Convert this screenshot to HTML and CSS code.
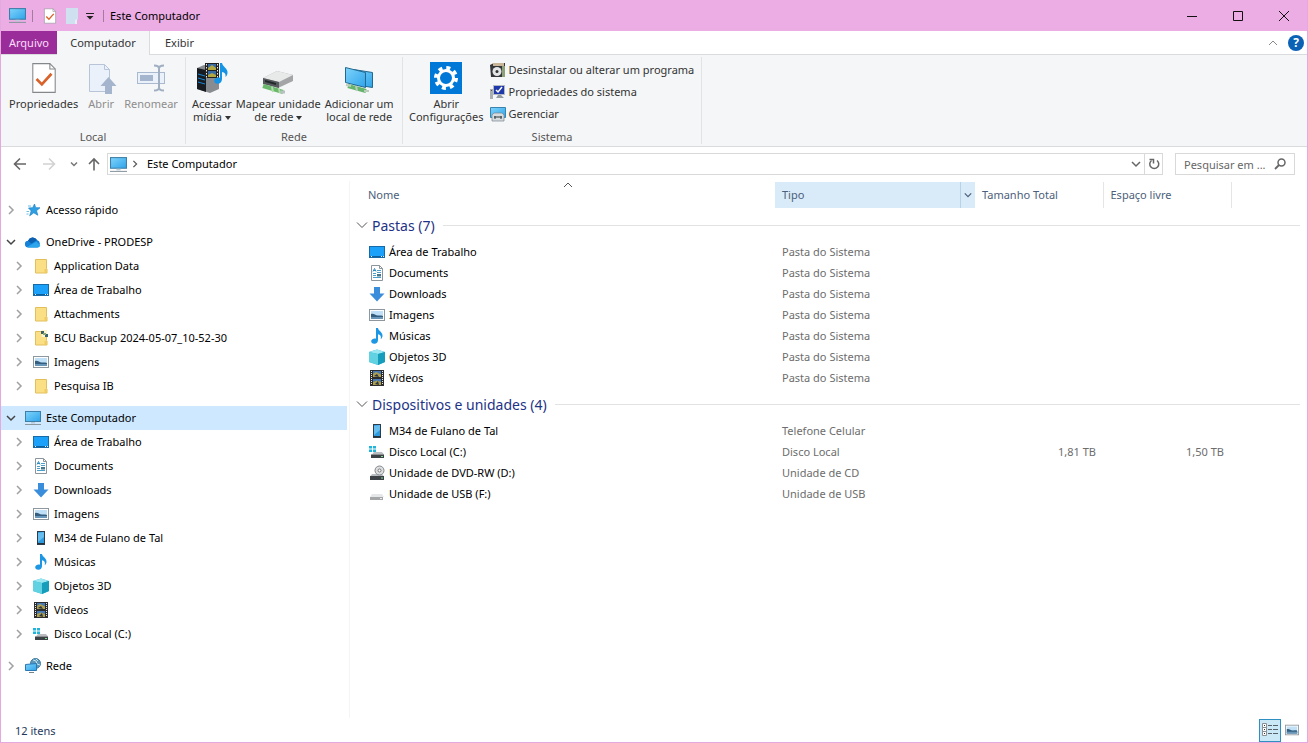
FILE: index.html
```html
<!DOCTYPE html>
<html lang="pt-BR">
<head>
    <meta charset="UTF-8">
    <meta name="viewport" content="width=device-width, initial-scale=1.0">
    <title>Este Computador</title>
    <link rel="stylesheet" href="styles.css">
</head>
<body>
    <!-- Ícones reutilizados -->
    <svg class="sprite" aria-hidden="true">
        <defs>
            <linearGradient id="screen" x1="0" y1="0" x2="1" y2="1">
                <stop offset="0" stop-color="#7fd4fb"/>
                <stop offset="1" stop-color="#2ea3ea"/>
            </linearGradient>
        </defs>
        <symbol id="pc" viewBox="0 0 16 16">
            <rect x="0.5" y="1.5" width="15" height="10" fill="url(#screen)" stroke="#3d7fa8"/>
            <path d="M6 12h4v1.500H6z" fill="#b9cbd6"/>
            <path d="M0 14.500h16" stroke="#8a979f"/>
        </symbol>
        <symbol id="star" viewBox="0 0 16 16">
            <path d="M9.500 2l1.200 3.700 4.300.1-3.500 2.900 1.300 4.500-4-2.400-4.100 3 1.500-4.900L3.500 6l4.200-.3z" fill="#2f9fe4" stroke="#1b82c6" stroke-width=".7"/>
            <path d="M3 4h3M1.500 9.500H4M1.500 12h2" stroke="#6cbcec"/>
        </symbol>
        <symbol id="cloud" viewBox="0 0 16 16">
            <path d="M3.500 13.500A3.400 3.400 0 0 1 3 6.700 5 5 0 0 1 12 6a4 4 0 0 1 .5 7.500z" fill="#1482d8"/>
            <path d="M3 6.700A5 5 0 0 1 12 6L6.500 9.500z" fill="#0b5fae"/>
            <path d="M2 13l9.500-5.500 3.800 4.200c-.5 1.200-1.500 1.800-2.800 1.800h-9z" fill="#2ba5ec"/>
        </symbol>
        <symbol id="folder" viewBox="0 0 16 16">
            <path d="M2.500 1.500h11v9l.5.500v4H2.500z" fill="#fbdf85" stroke="#e3bf59"/>
            <path d="M11.500 15v-3.500l2-1.500v5z" fill="#f1cb62"/>
        </symbol>
        <symbol id="folder-bcu" viewBox="0 0 16 16">
            <use href="#folder"/>
            <path d="M8.500 0H14v7H8.500z" fill="#fdf3cc"/>
            <path d="M8 1h3v3H8zM12 4h3v3h-3z" fill="#39606d"/>
            <path d="M10 3h3v2h-3z" fill="#8ba978"/>
        </symbol>
        <symbol id="desktop" viewBox="0 0 16 16">
            <rect x=".5" y="2.500" width="15" height="11" fill="#1ba1fa" stroke="#146ba8"/>
            <path d="M1 12.500h14" stroke="#0e5f9d"/>
            <path d="M2 12.500h1M12 12.500h1M14 12.500h1" stroke="#d9f1ff"/>
        </symbol>
        <symbol id="doc" viewBox="0 0 16 16">
            <path d="M2.500.5h8l3 3v12h-11z" fill="#fff" stroke="#8b959b"/>
            <path d="M10.500.5v3h3" fill="none" stroke="#8b959b"/>
            <path d="M4 6.500l1.500-3L7 6.500M4.500 5.500h2" fill="none" stroke="#2b8cc0"/>
            <path d="M8 5.500h4M4 8.500h3M8 7.500h4M4 10.500h3M4 12.500h8" stroke="#4ba0cb"/>
            <path d="M8 9h4v2.500H8z" fill="#45778f"/>
        </symbol>
        <symbol id="down" viewBox="0 0 16 16">
            <path d="M5 1h6v6.500h4.500L8 15.500.5 7.500H5z" fill="#3a8ddb"/>
        </symbol>
        <symbol id="image" viewBox="0 0 16 16">
            <rect x=".5" y="2.500" width="15" height="11" fill="#fff" stroke="#8e979d"/>
            <path d="M2 4h12v8H2z" fill="#bfe0f7"/>
            <path d="M2 7c3-1 4 1.500 7 1.500S13 8 14 9v3H2z" fill="#355f80"/>
            <path d="M2 10h12v2H2z" fill="#6796b9"/>
        </symbol>
        <symbol id="phone" viewBox="0 0 16 16">
            <rect x="4.500" y="1.500" width="7" height="13" fill="#2f9bdf" stroke="#2c3e4d"/>
            <path d="M5 3l6-1v5l-6 5z" fill="#66bdf0"/>
            <path d="M4 13.500h8" stroke="#27323c"/>
        </symbol>
        <symbol id="music" viewBox="0 0 16 16">
            <path d="M7 0h2c.3 3.200 4.800 3.800 4.500 8-.1 1.600-1 2.500-1.800 3.200.8-3-.4-4.400-2.700-5V12c0 2.300-1.500 3.600-3.500 3.700-2 .1-3.500-1.200-3.300-2.800.3-2 2.600-2.900 4.800-2.300z" fill="#1d97e3"/>
        </symbol>
        <symbol id="cube" viewBox="0 0 16 16">
            <path d="M0 3l8-2.500L16 3v10l-7 3-9-3z" fill="#28b4cf"/>
            <path d="M0 3l8-2.500L16 3 9 5z" fill="#9ce8f2"/>
            <path d="M0 3l9 2v11l-9-3z" fill="#60d2e2"/>
            <path d="M9 5l7-2v10l-7 3z" fill="#169dbb"/>
        </symbol>
        <symbol id="film" viewBox="0 0 16 16">
            <path d="M1 0h14v16H1z" fill="#2d2d30"/>
            <path d="M2.500 1v14M13.500 1v14" stroke="#e9e9e9" stroke-dasharray="1 1"/>
            <path d="M4 1h8v6H4zM4 9h8v6H4z" fill="#4779b5"/>
            <path d="M4 4l3-2 5 2.500V7H4zM4 12l4-1.500 4 1.500v3H4z" fill="#b0a04b"/>
            <path d="M5 6l3-2 2 3zM6 14l3-3 1 4z" fill="#29354a"/>
        </symbol>
        <symbol id="disk" viewBox="0 0 16 16">
            <path d="M3 9h10l2 2.500H1z" fill="#b9bdc0"/>
            <path d="M1 11h14v4H1z" fill="#3c4246"/>
            <path d="M12 13h2" stroke="#7be28c"/>
        </symbol>
        <symbol id="disk-win" viewBox="0 0 16 16">
            <path d="M5 8h8l2 2.500H3z" fill="#b9bdc0"/>
            <path d="M2 10.500h13V14H2z" fill="#3c4246"/>
            <path d="M12 12.500h2" stroke="#7be28c"/>
            <path d="M0 2h3v2.500H0zM4 2h3v2.500H4zM0 5.500h3V8H0zM4 5.500h3V8H4z" fill="#1eb4dc"/>
        </symbol>
        <symbol id="disk-dvd" viewBox="0 0 16 16">
            <use href="#disk"/>
            <circle cx="10.500" cy="5.500" r="4.500" fill="#dcdee0" stroke="#85898c"/>
            <circle cx="10.500" cy="5.500" r="1.500" fill="#fff" stroke="#777"/>
        </symbol>
        <symbol id="disk-usb" viewBox="0 0 16 16">
            <path d="M3 8h10l2 3H1z" fill="#e6e7e8"/>
            <path d="M1 11h13v3H1z" fill="#a4a6a8"/>
            <path d="M11 12.500h2" stroke="#eee"/>
        </symbol>
        <symbol id="network" viewBox="0 0 16 16">
            <circle cx="10.500" cy="5.500" r="5" fill="#5d98ba" stroke="#3f7ba1"/>
            <path d="M8 2l3 1 1 3 3 1M11 1l2 2" fill="none" stroke="#cbe4ed"/>
            <path d="M.5 6.500l11-1v7h-11z" fill="url(#screen)" stroke="#2878b5"/>
            <path d="M4 14.500h5" stroke="#72848e"/>
        </symbol>
        <symbol id="check-doc" viewBox="0 0 24 30">
            <path d="M1.500 1.500h16l5 5v22h-21z" fill="#fff" stroke="#85888b"/>
            <path d="M17.500 1.500v5h5" fill="none" stroke="#85888b"/>
            <path d="M5 16l5 5 9-10" fill="none" stroke="#d9622b" stroke-width="2.500"/>
        </symbol>
        <symbol id="chev" viewBox="0 0 10 10">
            <path d="M3 1l4 4-4 4" fill="none" stroke="currentColor" stroke-width="1.500"/>
        </symbol>
        <symbol id="chev-down" viewBox="0 0 10 10">
            <path d="M1 3l4 4 4-4" fill="none" stroke="currentColor" stroke-width="1.500"/>
        </symbol>
        <symbol id="chev-thin" viewBox="0 0 12 12">
            <path d="M1 3.500l5 5 5-5" fill="none" stroke="currentColor"/>
        </symbol>
        <symbol id="chev-up" viewBox="0 0 10 10">
            <path d="M1 7l4-4 4 4" fill="none" stroke="currentColor"/>
        </symbol>
    </svg>

    <div class="window">
        <header class="titlebar">
            <svg class="title-pc"><use href="#pc"/></svg>
            <span class="title-sep"></span>
            <button class="quick" aria-label="Propriedades"><svg class="icon"><use href="#check-doc"/></svg></button>
            <button class="quick" aria-label="Nova pasta">
                <svg class="icon" viewBox="0 0 16 16"><path d="M2 0h12v11l-1 1v4H2z" fill="#cfe1f0"/><path d="M11 16v-4l2-1v5z" fill="#e6eff5"/></svg>
            </button>
            <button class="quick quick-more" aria-label="Personalizar">
                <svg class="more" viewBox="0 0 8 8"><path d="M0 1.500h8" stroke="#222"/><path d="M0.500 4h7L4 7.500z" fill="#222"/></svg>
            </button>
            <span class="title-sep"></span>
            <h1>Este Computador</h1>
            <div class="window-buttons">
                <button aria-label="Minimizar"><svg viewBox="0 0 12 12"><path d="M1 6.500h10" stroke="#111"/></svg></button>
                <button aria-label="Maximizar"><svg viewBox="0 0 12 12"><path d="M1.500 1.500h9v9h-9z" fill="none" stroke="#111"/></svg></button>
                <button aria-label="Fechar"><svg viewBox="0 0 12 12"><path d="M1 1l10 10M11 1L1 11" stroke="#111"/></svg></button>
            </div>
        </header>

        <nav class="tabs">
            <button class="tab tab-file">Arquivo</button>
            <button class="tab tab-active">Computador</button>
            <button class="tab">Exibir</button>
            <div class="tabs-right">
                <button aria-label="Minimizar a Faixa de Opções"><svg class="chev gray"><use href="#chev-up"/></svg></button>
                <button class="help" aria-label="Ajuda">?</button>
            </div>
        </nav>

        <section class="ribbon">
            <div class="group group-local">
                <div class="tools">
                    <button class="tool">
                        <svg class="big"><use href="#check-doc"/></svg>
                        <span>Propriedades</span>
                    </button>
                    <button class="tool" disabled>
                        <svg class="big" viewBox="0 0 32 32">
                            <path d="M4.500 2.500h15l5 5v22h-20z" fill="#eaf1fa" stroke="#b8c5d8"/>
                            <path d="M19.500 2.500v5h5" fill="none" stroke="#b8c5d8"/>
                            <path d="M23.500 15l8 9H27v8h-7v-8h-4.500z" fill="#a5b5cd"/>
                        </svg>
                        <span>Abrir</span>
                    </button>
                    <button class="tool" disabled>
                        <svg class="big" viewBox="0 0 32 32">
                            <rect x="2.500" y="10.500" width="27" height="11" fill="#eaf1fa" stroke="#a9b9d0"/>
                            <path d="M5 13h13v6H5z" fill="#a5b5cd"/>
                            <path d="M19 3.500c3 0 5 .5 5 3v19c0 2.500-2 3-5 3M29 3.500c-3 0-5 .5-5 3v19c0 2.500 2 3 5 3" fill="none" stroke="#a0aec2" stroke-width="2"/>
                        </svg>
                        <span>Renomear</span>
                    </button>
                </div>
                <h2>Local</h2>
            </div>
            <div class="group group-rede">
                <div class="tools">
                    <button class="tool">
                        <svg class="big" viewBox="0 0 32 32">
                            <path d="M1 6l7-3 15 2v22l-9 4L1 27z" fill="#888b90"/>
                            <path d="M1 6l9 2v22l-9-3z" fill="#171c22"/>
                            <path d="M2 12l7 2M2 16l7 2M2 20l7 2" stroke="#1786d5"/>
                            <path d="M9 1h14v15H9z" fill="#222"/>
                            <path d="M10.500 2v14M21.500 2v14" stroke="#eee" stroke-dasharray="1.500 1.500"/>
                            <path d="M12 2h8v6h-8zM12 9h8v6h-8z" fill="#3769a5"/>
                            <path d="M12 6l4-3 4 3v2h-8zM12 13l4-2 4 2v2h-8z" fill="#b3a73f"/>
                            <path d="M24 1h2c.5 4 6 5 5.500 10-.2 2-1 3-2 4 .5-3-.7-4.500-3.500-5v7c0 3-2 4.700-4.300 4.800-2.200 0-3.700-1.300-3.500-3.300.3-2.500 3-3.500 5.800-2.700z" fill="#1593e5"/>
                        </svg>
                        <span>Acessar<br>mídia <i class="caret"></i></span>
                    </button>
                    <button class="tool">
                        <svg class="big" viewBox="0 0 32 32">
                            <path d="M1 16l14-7 16 4v6l-15 7-15-5z" fill="#a3a5a6"/>
                            <path d="M1 16l14-7 16 4-14 7z" fill="#e8e9e9"/>
                            <path d="M1 16l16 4v6L1 22z" fill="#555a5d"/>
                            <path d="M3 18l11 3v2L3 20z" fill="#24282b"/>
                            <path d="M1 24l20 6" stroke="#69b86c" stroke-width="4"/>
                            <path d="M10 25l1 5M17 27l1 4" stroke="#b1dcaa" stroke-width="2"/>
                            <path d="M19 30h4" stroke="#b9bfc2" stroke-width="3"/>
                        </svg>
                        <span>Mapear unidade<br>de rede <i class="caret"></i></span>
                    </button>
                    <button class="tool">
                        <svg class="big" viewBox="0 0 32 32">
                            <path d="M10.500 7.500l19 3v15l-19-3z" fill="url(#screen)" stroke="#24688f"/>
                            <path d="M2.500 5.500l20 5v15l-20-5z" fill="url(#screen)" stroke="#24688f"/>
                            <path d="M5 24l18 5" stroke="#65b46b" stroke-width="4"/>
                            <path d="M13 24l1 5M3 23l5 1M21 29h5" stroke="#b9cdbb" stroke-width="2"/>
                        </svg>
                        <span>Adicionar um<br>local de rede</span>
                    </button>
                </div>
                <h2>Rede</h2>
            </div>
            <div class="group group-sistema">
                <div class="tools">
                    <button class="tool">
                        <svg class="big" viewBox="0 0 32 32">
                            <path d="M0 0h32v32H0z" fill="#0078d7"/>
                            <circle cx="16" cy="16" r="7.500" fill="none" stroke="#fff" stroke-width="3"/>
                            <circle cx="16" cy="16" r="10" fill="none" stroke="#fff" stroke-width="4" stroke-dasharray="3.927 3.927"/>
                        </svg>
                        <span>Abrir<br>Configurações</span>
                    </button>
                    <div class="small-tools">
                        <button class="small-tool">
                            <svg class="icon" viewBox="0 0 16 16">
                                <path d="M0 3l4-2h11v14H1z" fill="#35363a"/>
                                <path d="M3 1h11v3H3z" fill="#c9b698"/>
                                <path d="M12 4h3v11h-3z" fill="#8da27a"/>
                                <circle cx="7" cy="9.500" r="4.500" fill="#e3e5e6"/>
                                <circle cx="7" cy="9.500" r="1.500" fill="#333"/>
                            </svg>
                            Desinstalar ou alterar um programa
                        </button>
                        <button class="small-tool">
                            <svg class="icon" viewBox="0 0 16 16">
                                <path d="M0 5h3v10H0z" fill="#a9aeb3"/>
                                <path d="M1 6.500h1" stroke="#555"/>
                                <path d="M3.500 1.500h11v9h-11z" fill="#2039aa" stroke="#b2b9c2"/>
                                <path d="M6 6l2 2 4-5" fill="none" stroke="#fff" stroke-width="1.500"/>
                                <path d="M8 11h3l3 3H6z" fill="#939ba3"/>
                            </svg>
                            Propriedades do sistema
                        </button>
                        <button class="small-tool">
                            <svg class="icon" viewBox="0 0 16 16">
                                <path d="M.5 1.500h15v10H.5z" fill="url(#screen)" stroke="#3984af"/>
                                <path d="M2 9l2-2h8l2 2v6H2z" fill="#d7dcdf" stroke="#75858f" stroke-width=".7"/>
                                <path d="M4 11h8M5 10v3M11 10v3" stroke="#2f3a42"/>
                            </svg>
                            Gerenciar
                        </button>
                    </div>
                </div>
                <h2>Sistema</h2>
            </div>
        </section>

        <div class="address-row">
            <button class="nav-btn" aria-label="Voltar"><svg viewBox="0 0 14 14"><path d="M13 7H1.500M7 1.500L1.500 7 7 12.500" fill="none" stroke="#666" stroke-width="1.600"/></svg></button>
            <button class="nav-btn" aria-label="Avançar" disabled><svg viewBox="0 0 14 14"><path d="M1 7h11.500M7 1.500L12.500 7 7 12.500" fill="none" stroke="#d2d2d2" stroke-width="1.600"/></svg></button>
            <button class="nav-btn nav-recent" aria-label="Locais recentes"><svg viewBox="0 0 14 14"><path d="M4 5.500l3 3 3-3" fill="none" stroke="#777" stroke-width="1.500"/></svg></button>
            <button class="nav-btn nav-up" aria-label="Acima"><svg viewBox="0 0 14 14"><path d="M7 13.500V2M2 7l5-5 5 5" fill="none" stroke="#666" stroke-width="1.600"/></svg></button>
            <div class="address">
                <svg class="address-pc"><use href="#pc"/></svg>
                <svg class="crumb"><use href="#chev"/></svg>
                <a href="#">Este Computador</a>
                <button class="address-drop" aria-label="Locais anteriores"><svg class="chev"><use href="#chev-down"/></svg></button>
                <button class="refresh" aria-label="Atualizar">
                    <svg viewBox="0 0 12 12"><path d="M9 2.500A4.500 4.500 0 1 1 3.500 2.500" fill="none" stroke="#666" stroke-width="1.500"/><path d="M1.500 1.500h4v4" fill="none" stroke="#666" stroke-width="1.500"/></svg>
                </button>
            </div>
            <label class="search">
                <input type="text" placeholder="Pesquisar em ..." aria-label="Pesquisar em Este Computador">
                <svg viewBox="0 0 12 12"><circle cx="7.500" cy="4.500" r="3.500" fill="none" stroke="#666" stroke-width="1.500"/><path d="M5 7L1 11" stroke="#666" stroke-width="1.800"/></svg>
            </label>
        </div>

        <main class="panes">
            <aside class="sidebar">
                <ul class="tree">
                    <li><a href="#"><svg class="chev"><use href="#chev"/></svg><svg class="icon"><use href="#star"/></svg>Acesso rápido</a></li>
                    <li>
                        <a href="#" class="open"><svg class="chev"><use href="#chev-down"/></svg><svg class="icon"><use href="#cloud"/></svg>OneDrive - PRODESP</a>
                        <ul>
                            <li><a href="#"><svg class="chev"><use href="#chev"/></svg><svg class="icon"><use href="#folder"/></svg>Application Data</a></li>
                            <li><a href="#"><svg class="chev"><use href="#chev"/></svg><svg class="icon"><use href="#desktop"/></svg>Área de Trabalho</a></li>
                            <li><a href="#"><svg class="chev"><use href="#chev"/></svg><svg class="icon"><use href="#folder"/></svg>Attachments</a></li>
                            <li><a href="#"><svg class="chev"><use href="#chev"/></svg><svg class="icon"><use href="#folder-bcu"/></svg>BCU Backup 2024-05-07_10-52-30</a></li>
                            <li><a href="#"><svg class="chev"><use href="#chev"/></svg><svg class="icon"><use href="#image"/></svg>Imagens</a></li>
                            <li><a href="#"><svg class="chev"><use href="#chev"/></svg><svg class="icon"><use href="#folder"/></svg>Pesquisa IB</a></li>
                        </ul>
                    </li>
                    <li>
                        <a href="#" class="open selected"><svg class="chev"><use href="#chev-down"/></svg><svg class="icon"><use href="#pc"/></svg>Este Computador</a>
                        <ul>
                            <li><a href="#"><svg class="chev"><use href="#chev"/></svg><svg class="icon"><use href="#desktop"/></svg>Área de Trabalho</a></li>
                            <li><a href="#"><svg class="chev"><use href="#chev"/></svg><svg class="icon"><use href="#doc"/></svg>Documents</a></li>
                            <li><a href="#"><svg class="chev"><use href="#chev"/></svg><svg class="icon"><use href="#down"/></svg>Downloads</a></li>
                            <li><a href="#"><svg class="chev"><use href="#chev"/></svg><svg class="icon"><use href="#image"/></svg>Imagens</a></li>
                            <li><a href="#"><svg class="chev"><use href="#chev"/></svg><svg class="icon"><use href="#phone"/></svg>M34 de Fulano de Tal</a></li>
                            <li><a href="#"><svg class="chev"><use href="#chev"/></svg><svg class="icon"><use href="#music"/></svg>Músicas</a></li>
                            <li><a href="#"><svg class="chev"><use href="#chev"/></svg><svg class="icon"><use href="#cube"/></svg>Objetos 3D</a></li>
                            <li><a href="#"><svg class="chev"><use href="#chev"/></svg><svg class="icon"><use href="#film"/></svg>Vídeos</a></li>
                            <li><a href="#"><svg class="chev"><use href="#chev"/></svg><svg class="icon"><use href="#disk-win"/></svg>Disco Local (C:)</a></li>
                        </ul>
                    </li>
                    <li><a href="#"><svg class="chev"><use href="#chev"/></svg><svg class="icon"><use href="#network"/></svg>Rede</a></li>
                </ul>
            </aside>

            <section class="content">
                <table class="files">
                    <colgroup>
                        <col class="col-name"><col class="col-type"><col class="col-size"><col class="col-size"><col>
                    </colgroup>
                    <thead>
                        <tr>
                            <th scope="col" class="sorted">Nome<svg class="chev sort"><use href="#chev-up"/></svg></th>
                            <th scope="col" class="hovered"><div class="head-cell">Tipo<button aria-label="Filtrar"><svg class="chev-small"><use href="#chev-down"/></svg></button></div></th>
                            <th scope="col" class="divided">Tamanho Total</th>
                            <th scope="col" class="divided">Espaço livre</th>
                            <td></td>
                        </tr>
                    </thead>
                    <tbody>
                        <tr class="group-row"><th colspan="5" scope="rowgroup"><div class="group-title"><svg class="chev-big"><use href="#chev-thin"/></svg>Pastas (7)</div></th></tr>
                        <tr><td><a href="#"><svg class="icon"><use href="#desktop"/></svg>Área de Trabalho</a></td><td>Pasta do Sistema</td><td></td><td></td><td></td></tr>
                        <tr><td><a href="#"><svg class="icon"><use href="#doc"/></svg>Documents</a></td><td>Pasta do Sistema</td><td></td><td></td><td></td></tr>
                        <tr><td><a href="#"><svg class="icon"><use href="#down"/></svg>Downloads</a></td><td>Pasta do Sistema</td><td></td><td></td><td></td></tr>
                        <tr><td><a href="#"><svg class="icon"><use href="#image"/></svg>Imagens</a></td><td>Pasta do Sistema</td><td></td><td></td><td></td></tr>
                        <tr><td><a href="#"><svg class="icon"><use href="#music"/></svg>Músicas</a></td><td>Pasta do Sistema</td><td></td><td></td><td></td></tr>
                        <tr><td><a href="#"><svg class="icon"><use href="#cube"/></svg>Objetos 3D</a></td><td>Pasta do Sistema</td><td></td><td></td><td></td></tr>
                        <tr><td><a href="#"><svg class="icon"><use href="#film"/></svg>Vídeos</a></td><td>Pasta do Sistema</td><td></td><td></td><td></td></tr>
                    </tbody>
                    <tbody>
                        <tr class="group-row"><th colspan="5" scope="rowgroup"><div class="group-title"><svg class="chev-big"><use href="#chev-thin"/></svg>Dispositivos e unidades (4)</div></th></tr>
                        <tr><td><a href="#"><svg class="icon"><use href="#phone"/></svg>M34 de Fulano de Tal</a></td><td>Telefone Celular</td><td></td><td></td><td></td></tr>
                        <tr><td><a href="#"><svg class="icon"><use href="#disk-win"/></svg>Disco Local (C:)</a></td><td>Disco Local</td><td class="num">1,81 TB</td><td class="num">1,50 TB</td><td></td></tr>
                        <tr><td><a href="#"><svg class="icon"><use href="#disk-dvd"/></svg>Unidade de DVD-RW (D:)</a></td><td>Unidade de CD</td><td></td><td></td><td></td></tr>
                        <tr><td><a href="#"><svg class="icon"><use href="#disk-usb"/></svg>Unidade de USB (F:)</a></td><td>Unidade de USB</td><td></td><td></td><td></td></tr>
                    </tbody>
                </table>
            </section>
        </main>

        <footer class="statusbar">
            <span>12 itens</span>
            <div class="views">
                <button class="view view-active" aria-label="Detalhes">
                    <svg class="icon" viewBox="0 0 16 16"><path d="M.5 1.500h4v4h-4zM.5 5.500h4v4h-4zM.5 9.500h4v4h-4z" fill="#fff" stroke="#8a8f93"/><path d="M2 3.500h1M2 7.500h1M2 11.500h1" stroke="#333"/><path d="M6 3.500h4M11 3.500h5M6 7.500h4M11 7.500h5M6 11.500h4M11 11.500h5" stroke="#56616a"/></svg>
                </button>
                <button class="view" aria-label="Miniaturas"><svg class="thumb"><use href="#image"/></svg></button>
            </div>
        </footer>
    </div>
</body>
</html>
```
FILE: styles.css
```css
* {
    margin: 0;
    padding: 0;
    box-sizing: border-box;
}

body {
    font-family: 'Segoe UI', 'Noto Sans', 'Open Sans', sans-serif;
    font-size: 11px;
    color: #000;
    background: #fff;
}

button {
    font: inherit;
    color: inherit;
    background: none;
    border: none;
}

a {
    color: inherit;
    text-decoration: none;
}

svg {
    display: block;
    flex-shrink: 0;
}

.sprite {
    position: absolute;
    width: 0;
    height: 0;
}

.icon {
    width: 16px;
    height: 16px;
}

.chev {
    width: 10px;
    height: 10px;
}

.chev-small {
    width: 8px;
    height: 8px;
    margin: 0 1px;
}

.gray {
    color: #888;
}

.window {
    min-height: 100vh;
    display: flex;
    flex-direction: column;
    border: 1px solid #e6a9df;
    border-top: none;
}

/* Barra de título */
.titlebar {
    height: 31px;
    display: flex;
    align-items: center;
    padding-left: 8px;
    background: #ebade4;
}

.title-pc {
    width: 17px;
    height: 17px;
}

.title-sep {
    width: 1px;
    height: 12px;
    margin: 0 6px;
    background: #a57aa0;
}

.quick {
    width: 22px;
    height: 22px;
    display: flex;
    align-items: center;
    justify-content: center;
}

.quick-more {
    width: 14px;
}

.more {
    width: 8px;
    height: 8px;
}

.titlebar h1 {
    font-size: 11px;
    font-weight: normal;
}

.window-buttons {
    display: flex;
    margin-left: auto;
}

.window-buttons button {
    width: 46px;
    height: 31px;
    display: flex;
    align-items: center;
    justify-content: center;
}

.window-buttons svg {
    width: 12px;
    height: 12px;
}

/* Abas */
.tabs {
    height: 24px;
    display: flex;
    border-bottom: 1px solid #dadbdc;
}

.tab {
    padding: 0 15px;
    color: #333;
}

.tab-file {
    width: 56px;
    padding: 0;
    color: #fbdcf8;
    background: #9b2d9b;
}

.tab-active {
    width: 93px;
    height: 24px;
    padding: 0 0 1px;
    background: #f5f6f7;
    border-right: 1px solid #dadbdc;
}

.tabs-right {
    margin-left: auto;
    padding-right: 3px;
    display: flex;
    align-items: center;
    gap: 10px;
}

.help {
    width: 16px;
    height: 16px;
    border-radius: 50%;
    background: #0b62b5;
    color: #fff;
    font-size: 12px;
    font-weight: bold;
    line-height: 16px;
}

/* Faixa de opções */
.ribbon {
    height: 92px;
    display: flex;
    background: #f5f6f7;
    border-bottom: 1px solid #dadbdc;
}

.group {
    display: flex;
    flex-direction: column;
    justify-content: space-between;
    margin: 2px 0;
    border-right: 1px solid #e2e3e4;
}

.group h2 {
    font-size: 11px;
    font-weight: normal;
    line-height: 14px;
    text-align: center;
    color: #555;
}

.group-local {
    width: 185px;
}

.group-rede {
    width: 217px;
}

.group-sistema {
    width: 299px;
}

.tools {
    display: flex;
    gap: 4px;
    padding: 2px 6px 0;
}

.group-local .tools {
    gap: 7px;
    padding-left: 8px;
}

.group-sistema .tools {
    gap: 6px;
}

.tool {
    display: flex;
    flex-direction: column;
    align-items: center;
    gap: 3px;
    padding-top: 3px;
    line-height: 13px;
    white-space: nowrap;
    color: #333;
}

.tool:disabled {
    color: #8d8d8d;
}

.big {
    width: 32px;
    height: 32px;
}

.caret {
    display: inline-block;
    border: 3px solid transparent;
    border-top: 4px solid #333;
    border-bottom: none;
    vertical-align: middle;
}

.small-tool {
    height: 22px;
    display: flex;
    align-items: center;
    gap: 3px;
    line-height: 14px;
    white-space: nowrap;
    color: #333;
}

/* Barra de endereço */
.address-row {
    height: 34px;
    display: flex;
    align-items: center;
    padding: 0 12px;
}

.nav-btn {
    margin-right: 15px;
}

.nav-btn svg {
    width: 14px;
    height: 14px;
}

.nav-recent {
    margin: 0 6px 0 -4px;
}

.nav-up {
    margin-right: 6px;
}

.address {
    flex: 1;
    height: 22px;
    display: flex;
    align-items: center;
    padding-left: 2px;
    line-height: 14px;
    border: 1px solid #d9d9d9;
}

.address-pc {
    width: 17px;
    height: 17px;
}

.crumb {
    width: 8px;
    height: 8px;
    margin: 0 8px 0 4px;
    color: #555;
}

.address-drop {
    margin-left: auto;
    padding-right: 3px;
    color: #666;
}

.refresh {
    width: 18px;
    height: 20px;
    display: flex;
    align-items: center;
    justify-content: center;
    border-left: 1px solid #d9d9d9;
}

.refresh svg,
.search svg {
    width: 12px;
    height: 12px;
}

.search {
    width: 120px;
    height: 22px;
    display: flex;
    align-items: center;
    margin-left: 12px;
    padding: 0 8px;
    border: 1px solid #d9d9d9;
}

.search input {
    flex: 1;
    min-width: 0;
    border: none;
    outline: none;
    font: inherit;
    background: none;
}

.search input::placeholder {
    color: #666;
    opacity: 1;
}

/* Painéis */
.panes {
    flex: 1;
    display: flex;
}

.sidebar {
    width: 349px;
    padding: 17px 2px 0 0;
    border-right: 1px solid #f5f5f5;
}

.tree,
.tree ul {
    list-style: none;
}

.tree > li {
    margin-bottom: 8px;
}

.tree a {
    height: 24px;
    display: flex;
    align-items: center;
    padding-left: 5px;
    line-height: 14px;
    white-space: nowrap;
}

.tree ul a {
    padding-left: 13px;
}

.tree .icon {
    margin: 0 5px 0 9px;
}

.tree .chev {
    color: #a0a0a0;
}

.tree .open .chev {
    color: #444;
}

.tree .selected {
    background: #cde8ff;
}

.content {
    flex: 1;
    padding: 1px 7px 0 0;
}

.files {
    width: 100%;
    table-layout: fixed;
    border-collapse: collapse;
}

.col-name {
    width: 425px;
}

.col-type {
    width: 200px;
}

.col-size {
    width: 128px;
}

.files thead tr {
    height: 26px;
    line-height: 14px;
}

.files thead th {
    font-weight: normal;
    text-align: left;
    color: #4c607a;
    padding-left: 7px;
}

.files thead .sorted {
    position: relative;
    padding-left: 18px;
}

.sort {
    position: absolute;
    top: -2px;
    left: 50%;
    color: #555;
}

.hovered {
    background: #d9ebf9;
}

.head-cell {
    display: flex;
    align-items: center;
    justify-content: space-between;
}

.head-cell button {
    height: 26px;
    padding: 0 2px;
    border-left: 1px solid #b9d3e6;
}

.divided {
    border-right: 1px solid #e5e5e5;
}

.files tbody td {
    height: 21px;
    padding-left: 7px;
    color: #6d6d6d;
}

.files tbody td:first-child {
    padding-left: 19px;
    color: #000;
}

.files td a {
    display: flex;
    align-items: center;
    gap: 4px;
}

.files tbody .num {
    padding: 0 7px;
    text-align: right;
}

.group-title {
    height: 32px;
    display: flex;
    align-items: center;
    padding-left: 6px;
    font-size: 14px;
    font-weight: normal;
    color: #1e3287;
}

.files thead + tbody .group-row {
    height: 33px;
    vertical-align: bottom;
}

.group-title::after {
    content: '';
    flex: 1;
    height: 1px;
    margin-left: 8px;
    background: #e2e2e2;
}

.chev-big {
    width: 12px;
    height: 12px;
    margin-right: 4px;
    color: #555;
}

/* Barra de status */
.statusbar {
    height: 24px;
    display: flex;
    align-items: center;
    padding: 0 4px 0 14px;
    color: #1e395b;
}

.views {
    display: flex;
    margin-left: auto;
}

.view {
    width: 22px;
    height: 23px;
    display: flex;
    align-items: center;
    justify-content: center;
}

.view-active {
    background: #cbe8f6;
    border: 1px solid #2f8fc0;
}

.thumb {
    width: 14px;
    height: 14px;
}
```
